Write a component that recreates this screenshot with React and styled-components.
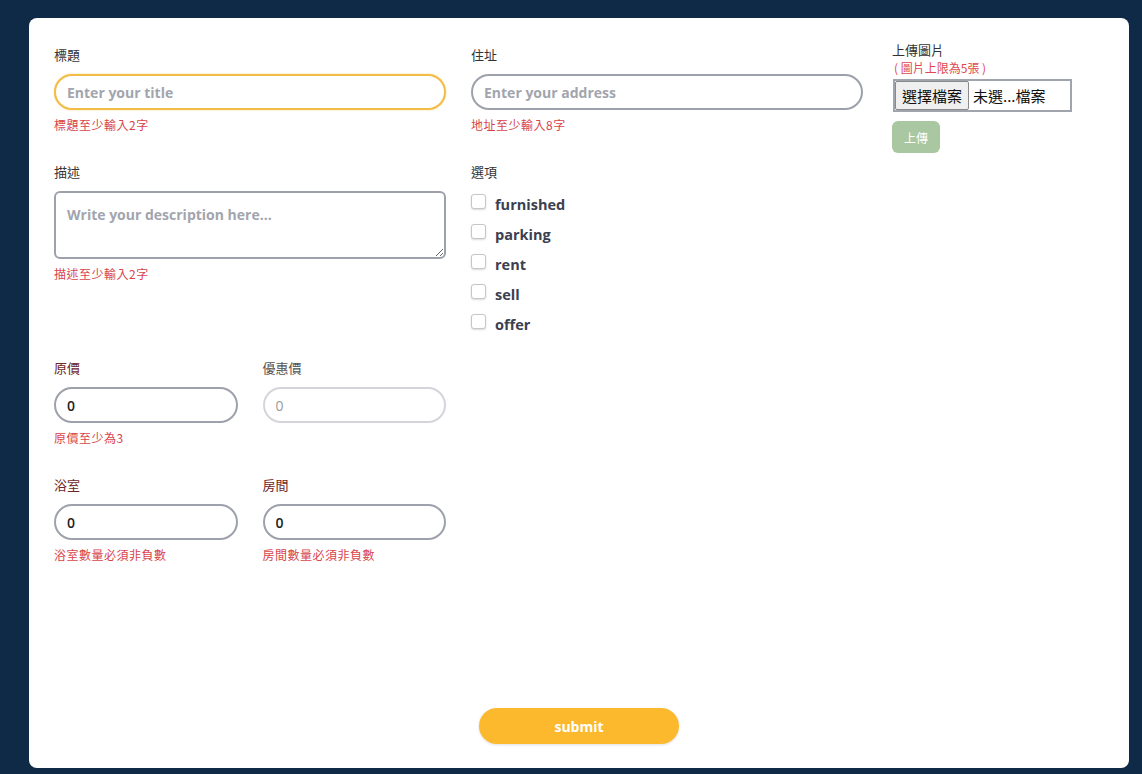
import styled, { createGlobalStyle } from "styled-components";

const GlobalStyle = createGlobalStyle`
  html, body {
    margin: 0;
    padding: 0;
    background: #0f2a47;
  }
  body {
    font-family: "Open Sans", "Noto Sans CJK TC", sans-serif;
  }
`;

const Page = styled.div`
  height: 774px;
  box-sizing: border-box;
  padding: 18px 13px 6px 29px;
  display: flex;
`;

const Card = styled.form`
  flex: 1;
  background: #fff;
  border-radius: 8px;
  box-sizing: border-box;
  padding: 28px 25px 24px 25px;
  display: flex;
  flex-direction: column;
`;

const FormGrid = styled.div`
  display: grid;
  grid-template-columns: 392px 392px 1fr;
  column-gap: 25px;
  row-gap: 30px;
  align-items: start;
`;

const Field = styled.div`
  display: flex;
  flex-direction: column;
`;

const UploadCol = styled.div`
  grid-row: span 2;
  display: flex;
  flex-direction: column;
  align-items: flex-start;
  padding-left: 4px;
  margin-top: -5px;
`;

const Label = styled.label`
  font-family: "Noto Sans CJK TC", sans-serif;
  font-size: 13px;
  line-height: 18px;
  color: ${(p) => (p.$tone === "red" ? "#6e2626" : p.$tone === "gray" ? "#555" : "#333")};
  margin-bottom: 10px;
`;

const TextInput = styled.input`
  box-sizing: border-box;
  height: 36px;
  width: 100%;
  border: 2px solid ${(p) => (p.$focus ? "#f2bd46" : "#9da1ab")};
  border-radius: 18px;
  padding: 0 11px;
  font-family: "Open Sans", "Noto Sans CJK TC", sans-serif;
  font-size: 14px;
  font-weight: 600;
  color: #222;
  outline: none;
  box-shadow: ${(p) => (p.$focus ? "0 0 2px rgba(242,189,70,0.6)" : "none")};
  &::placeholder {
    color: #a2a5ad;
    font-weight: 700;
  }
  &:disabled {
    border-color: #d3d5da;
    background: #fff;
    color: #9a9a9a;
    font-weight: 400;
  }
`;

const TextArea = styled.textarea`
  box-sizing: border-box;
  height: 68px;
  width: 100%;
  border: 2px solid #9da1ab;
  border-radius: 6px;
  padding: 12px 11px;
  font-family: "Open Sans", "Noto Sans CJK TC", sans-serif;
  font-size: 14px;
  font-weight: 700;
  outline: none;
  resize: vertical;
  &::placeholder {
    color: #a2a5ad;
  }
`;

const ErrorText = styled.span`
  font-family: "Noto Sans CJK TC", sans-serif;
  font-size: 12px;
  letter-spacing: 0.5px;
  line-height: 16px;
  color: #d8444b;
  margin-top: 7px;
`;

const OptionList = styled.div`
  display: flex;
  flex-direction: column;
  margin-top: -2px;
  margin-bottom: -10px;
`;

const Option = styled.label`
  display: flex;
  align-items: center;
  height: 30px;
  gap: 9px;
  font-family: "Open Sans", sans-serif;
  font-size: 14.5px;
  font-weight: 700;
  color: #3a4050;
`;

const Check = styled.span`
  width: 13px;
  height: 13px;
  border: 1.5px solid #c3c6cd;
  border-radius: 3px;
  box-shadow: 0 1px 2px rgba(0, 0, 0, 0.15);
  margin-top: -6px;
  background: #fff;
`;

const PairGrid = styled.div`
  grid-column: 1;
  display: grid;
  grid-template-columns: 1fr 1fr;
  column-gap: 25px;
  row-gap: 30px;
`;

const Hint = styled.span`
  font-family: "Noto Sans CJK TC", sans-serif;
  font-size: 12px;
  line-height: 14px;
  color: #e0484f;
  margin: -8px 0 4px 2px;
  white-space: pre;
`;

const FileBox = styled.div`
  display: flex;
  align-items: center;
  gap: 4px;
  border: 2px solid #a0a4ad;
  width: 179px;
  height: 33px;
  box-sizing: border-box;
  margin-left: 1px;
  font-family: "Noto Sans CJK TC", sans-serif;
  font-size: 15px;
  color: #111;
`;

const FileButton = styled.span`
  height: 100%;
  box-sizing: border-box;
  display: flex;
  align-items: center;
  padding: 0 6px;
  background: #efefef;
  border: 1px solid #8a8a8a;
  border-radius: 2px;
`;

const UploadButton = styled.button`
  margin-top: 9px;
  width: 48px;
  height: 32px;
  border: none;
  border-radius: 6px;
  background: #a9c7a1;
  color: #fff;
  font-family: "Noto Sans CJK TC", sans-serif;
  font-size: 12px;
`;

const SubmitRow = styled.div`
  margin-top: auto;
  display: flex;
  justify-content: center;
`;

const SubmitButton = styled.button`
  width: 200px;
  height: 36px;
  border: none;
  border-radius: 18px;
  background: #fdb92e;
  color: #fff;
  font-family: "Open Sans", sans-serif;
  font-size: 14px;
  font-weight: 700;
  box-shadow: 0 1px 3px rgba(0, 0, 0, 0.12);
`;

const options = ["furnished", "parking", "rent", "sell", "offer"];

export default function App() {
  return (
    <>
      <GlobalStyle />
      <Page>
        <Card onSubmit={(e) => e.preventDefault()}>
          <FormGrid>
            <Field>
              <Label>標題</Label>
              <TextInput $focus placeholder="Enter your title" />
              <ErrorText>標題至少輸入2字</ErrorText>
            </Field>
            <Field>
              <Label>住址</Label>
              <TextInput placeholder="Enter your address" />
              <ErrorText>地址至少輸入8字</ErrorText>
            </Field>
            <UploadCol>
              <Label>上傳圖片</Label>
              <Hint>( 圖片上限為5張 )</Hint>
              <FileBox>
                <FileButton>選擇檔案</FileButton>
                <span>未選...檔案</span>
              </FileBox>
              <UploadButton type="button">上傳</UploadButton>
            </UploadCol>
            <Field>
              <Label>描述</Label>
              <TextArea placeholder="Write your description here..." />
              <ErrorText>描述至少輸入2字</ErrorText>
            </Field>
            <Field>
              <Label>選項</Label>
              <OptionList>
                {options.map((o) => (
                  <Option key={o}>
                    <Check />
                    {o}
                  </Option>
                ))}
              </OptionList>
            </Field>
            <PairGrid>
              <Field>
                <Label $tone="red">原價</Label>
                <TextInput defaultValue="0" />
                <ErrorText>原價至少為3</ErrorText>
              </Field>
              <Field>
                <Label $tone="gray">優惠價</Label>
                <TextInput disabled defaultValue="0" />
              </Field>
              <Field>
                <Label $tone="red">浴室</Label>
                <TextInput defaultValue="0" />
                <ErrorText>浴室數量必須非負數</ErrorText>
              </Field>
              <Field>
                <Label $tone="red">房間</Label>
                <TextInput defaultValue="0" />
                <ErrorText>房間數量必須非負數</ErrorText>
              </Field>
            </PairGrid>
          </FormGrid>
          <SubmitRow>
            <SubmitButton type="submit">submit</SubmitButton>
          </SubmitRow>
        </Card>
      </Page>
    </>
  );
}
